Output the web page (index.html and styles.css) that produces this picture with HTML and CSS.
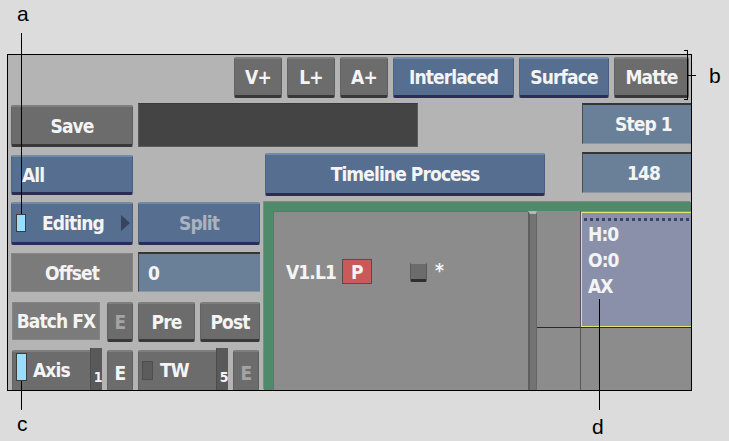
FILE: index.html
```html
<!DOCTYPE html>
<html>
<head>
<meta charset="utf-8">
<link rel="stylesheet" href="styles.css">
</head>
<body>
<div class="stage">
  <div class="frame">
    <div class="toolbar">
      <div class="btn gray w48">V+</div>
      <div class="btn gray w48">L+</div>
      <div class="btn gray w48">A+</div>
      <div class="btn blue w121">Interlaced</div>
      <div class="btn blue w90">Surface</div>
      <div class="btn gray w75">Matte</div>
    </div>
    <div class="row row2">
      <div class="btn gray save">Save</div>
      <div class="darkfield"></div>
      <div class="field step">Step 1</div>
    </div>
    <div class="row row3">
      <div class="btn blue all">All</div>
      <div class="btn blue tp">Timeline Process</div>
      <div class="field num">148</div>
    </div>
    <div class="lower">
      <div class="leftcol">
        <div class="lrow r4">
          <div class="btn blue w122 editing">
            <span class="ind on"></span><span class="lbl">Editing</span><span class="tri"></span>
          </div>
          <div class="btn blue w122 dim">Split</div>
        </div>
        <div class="lrow r5">
          <div class="flat offset">Offset</div>
          <div class="field zero">0</div>
        </div>
        <div class="lrow r6">
          <div class="flat batch">Batch FX</div>
          <div class="btn gray e dimg">E</div>
          <div class="btn gray pre">Pre</div>
          <div class="btn gray post">Post</div>
        </div>
        <div class="lrow r7">
          <div class="btn gray slot axis">
            <span class="ind on"></span><span class="lbl">Axis</span><span class="slider"><span class="sn">1</span></span>
          </div>
          <div class="btn gray e">E</div>
          <div class="btn gray slot tw">
            <span class="ind off"></span><span class="lbl">TW</span><span class="slider"><span class="sn">5</span></span>
          </div>
          <div class="btn gray e dimg">E</div>
        </div>
      </div>
      <div class="green">
        <div class="tlmain">
          <div class="track">
            <span class="tname">V1.L1</span>
            <span class="pbox">P</span>
            <span class="sq"></span>
            <span class="star">*</span>
          </div>
        </div>
        <div class="scroll"></div>
        <div class="tlright">
          <div class="cell c1"></div>
          <div class="cell c2">
            <div class="clip">
              <div class="dots"></div>
              <div class="ctext">H:0</div>
              <div class="ctext">O:0</div>
              <div class="ctext">AX</div>
            </div>
          </div>
          <div class="cell c3"></div>
          <div class="cell c4"></div>
        </div>
      </div>
    </div>
  </div>

  <div class="note la">a</div>
  <div class="note lb">b</div>
  <div class="note lc">c</div>
  <div class="note ld">d</div>
  <div class="lead leada"></div>
  <div class="lead leadc"></div>
  <div class="lead leadd"></div>
  <div class="bracket"></div>
  <div class="btick"></div>
</div>
</body>
</html>
```
FILE: styles.css
```css
body {
  margin: 0;
  background: #dcdcdc;
}

.stage {
  position: relative;
  width: 729px;
  height: 441px;
  box-sizing: border-box;
  padding: 54px 0 0 7px;
  background: #dcdcdc;
  overflow: hidden;
  font-family: "DejaVu Sans Condensed", "DejaVu Sans", sans-serif;
  font-weight: bold;
  font-size: 19px;
  letter-spacing: -0.9px;
  color: #f4f4f4;
}

.frame {
  width: 685px;
  height: 337px;
  box-sizing: border-box;
  border: 1px solid #000;
  background: #b4b4b4;
  overflow: hidden;
  display: flex;
  flex-direction: column;
}

/* generic buttons */
.btn {
  box-sizing: border-box;
  display: flex;
  align-items: center;
  justify-content: center;
  flex-shrink: 0;
  white-space: nowrap;
  border-radius: 2px;
}
.gray {
  background: #6c6c6c;
  border-top: 2px solid #7e7e7e;
  border-left: 1px solid #626262;
  border-right: 1px solid #5e5e5e;
  border-bottom: 3px solid #383838;
}
.blue {
  background: #566f90;
  border-top: 2px solid #7389a8;
  border-left: 1px solid #4d6484;
  border-right: 1px solid #4a5f7e;
  border-bottom: 3px solid #2b2d58;
}
.field {
  box-sizing: border-box;
  flex-shrink: 0;
  display: flex;
  align-items: center;
  justify-content: center;
  background: #6a8099;
  border-top: 2px solid #353535;
  border-left: 1px solid #4a4a4a;
  border-bottom: 1px solid #8a96a4;
}
.flat {
  box-sizing: border-box;
  flex-shrink: 0;
  display: flex;
  align-items: center;
  justify-content: center;
  background: #7b7b7b;
  border: 1px solid #858585;
}

/* toolbar */
.toolbar {
  flex: none;
  height: 41px;
  padding: 2px 2px 0 0;
  display: flex;
  justify-content: flex-end;
  gap: 5px;
}
.toolbar .btn { height: 41px; }
.w48 { width: 48px; }
.w75 { width: 75px; }
.w90 { width: 90px; }
.w121 { width: 121px; }
.w122 { width: 122px; }

.row {
  flex: none;
  display: flex;
  align-items: flex-start;
  padding-left: 3px;
}
.row2 { margin-top: 5px; height: 44px; }
.save { width: 122px; height: 42px; margin-top: 2px; }
.darkfield {
  flex-shrink: 0;
  box-sizing: border-box;
  width: 280px;
  height: 44px;
  margin-left: 5px;
  background: #444;
  border: 1px solid #5c5c5c;
  border-top-color: #3a3a3a;
}
.step { width: 122px; height: 41px; margin-left: 164px; }

.row3 { margin-top: 5px; height: 44px; }
.all { width: 122px; height: 40px; margin-top: 3px; justify-content: flex-start; padding-left: 10px; }
.tp { width: 280px; height: 43px; margin-top: 1px; margin-left: 132px; }
.num { width: 122px; height: 41px; margin-left: 37px; }

/* lower area */
.lower {
  flex: 1;
  margin-top: 6px;
  display: flex;
  min-height: 0;
}
.leftcol {
  flex: none;
  width: 252px;
  box-sizing: border-box;
  padding-left: 3px;
}
.lrow { display: flex; align-items: flex-start; }
.r4 { height: 43px; gap: 5px; }
.r4 .btn { height: 43px; }
.editing { justify-content: flex-start; padding-left: 4px; }
.ind {
  display: block;
  flex: none;
  width: 10px;
  height: 18px;
  box-sizing: border-box;
  border: 1px solid #3c3c3c;
}
.ind.on { background: #9bdcff; }
.ind.off { background: #5c5c5c; border-color: #4e4e4e; }
.editing .lbl { margin-left: 16px; }
.tri {
  margin-left: auto;
  margin-right: 2px;
  width: 0;
  height: 0;
  border-left: 9px solid #3a4262;
  border-top: 8px solid transparent;
  border-bottom: 8px solid transparent;
}
.dim { color: #aab3c0; }
.dimg { color: #a4a4a4; }

.r5 { margin-top: 7px; height: 40px; }
.offset { width: 122px; height: 39px; margin-top: 1px; }
.zero { width: 122px; height: 40px; margin-left: 5px; justify-content: flex-start; padding-left: 9px; }

.r6 { margin-top: 10px; height: 40px; }
.r6 .btn { height: 40px; }
.batch { width: 88px; height: 38px; margin-left: 1px; }
.e { width: 26px; margin-left: 7px; }
.pre { width: 57px; margin-left: 5px; }
.post { width: 60px; margin-left: 5px; }

.r7 { margin-top: 8px; height: 46px; }
.r7 .btn { height: 46px; }
.r7 .e { margin-left: 5px; }
.slot {
  width: 90px;
  justify-content: flex-start;
  align-items: stretch;
  padding-left: 3px;
  border-right: none;
}
.slot .ind { align-self: flex-start; margin-top: 1px; height: 28px; width: 11px; }
.slot .lbl { align-self: center; margin-top: -6px; margin-left: 6px; }
.axis { margin-left: 1px; }
.tw { margin-left: 5px; }
.tw .ind { height: 19px; margin-top: 9px; }
.tw .lbl { margin-left: 7px; }
.slider {
  margin-left: auto;
  margin-top: -4px;
  width: 12px;
  background: #595959;
  border-left: 1px solid #4c4c4c;
  display: flex;
  align-items: flex-start;
  justify-content: center;
  padding-top: 22px;
  box-sizing: border-box;
}
.sn {
  font-size: 14px;
  line-height: 14px;
  letter-spacing: 0;
  margin-left: 3px;
}

/* green timeline panel */
.green {
  flex: 1;
  margin-left: 4px;
  border-left: 9px solid #4f8a6b;
  border-top: 9px solid #4f8a6b;
  box-shadow: -1px -1px 0 #7e8a82;
  background: #8c8c8c;
  display: flex;
  min-width: 0;
}
.tlmain {
  flex: none;
  width: 255px;
  box-sizing: border-box;
  border-left: 1px solid #6e6e6e;
  border-top: 1px solid #6e6e6e;
  padding: 47px 0 0 12px;
}
.track {
  display: flex;
  align-items: center;
  height: 25px;
}
.pbox {
  box-sizing: border-box;
  width: 30px;
  height: 25px;
  margin-left: 6px;
  background: #c95a5a;
  border: 1px solid #5a4a4a;
  display: flex;
  align-items: center;
  justify-content: center;
}
.sq {
  box-sizing: border-box;
  width: 17px;
  height: 20px;
  margin-left: 38px;
  background: #6c6c6c;
  border-top: 2px solid #8c8c8c;
  border-bottom: 3px solid #2e2e2e;
  border-left: 1px solid #5a5a5a;
  border-right: 1px solid #5a5a5a;
  border-radius: 2px;
}
.star { margin-left: 8px; margin-top: -3px; }
.scroll {
  flex: none;
  width: 9px;
  box-sizing: border-box;
  background: #737373;
  border-left: 2px solid #5e5e5e;
  border-right: 1px solid #666;
  border-top: 3px solid #b6b6b6;
}
.tlright {
  flex: 1;
  display: grid;
  grid-template-columns: 43px 1fr;
  grid-template-rows: 117px 1fr;
  min-width: 0;
}
.c1 { border-bottom: 1px solid #2a2a2a; }
.c2 { border-bottom: 1px solid #2a2a2a; border-left: 1px solid #555; padding-top: 1px; display: flex; }
.c4 { border-left: 1px solid #555; }
.clip {
  flex: 1;
  box-sizing: border-box;
  background: #8a90aa;
  border: 1px solid #e4e46e;
  border-right: none;
}
.dots {
  height: 3px;
  margin: 5px 0 0 2px;
  background: repeating-linear-gradient(to right, #3b4366 0 3px, transparent 3px 6px);
}
.ctext {
  padding-left: 6px;
  line-height: 26px;
}

/* annotations */
.note {
  position: absolute;
  font-family: "Liberation Sans", Arial, sans-serif;
  font-weight: normal;
  font-size: 21px;
  line-height: 21px;
  letter-spacing: 0;
  color: #000;
}
.la { left: 17px; top: 3px; }
.lb { left: 709px; top: 65px; }
.lc { left: 17px; top: 413px; }
.ld { left: 592px; top: 416px; }
.lead {
  position: absolute;
  width: 1.5px;
  background: #000;
}
.leada { left: 20.5px; top: 33px; height: 181px; }
.leadc { left: 20.5px; top: 381px; height: 29px; }
.leadd { left: 598.5px; top: 299px; height: 111px; }
.bracket {
  position: absolute;
  left: 684px;
  top: 50px;
  width: 3px;
  height: 48px;
  border: 1.5px solid #000;
  border-left: none;
}
.btick {
  position: absolute;
  left: 688px;
  top: 74.5px;
  width: 8px;
  height: 1.5px;
  background: #000;
}
```
